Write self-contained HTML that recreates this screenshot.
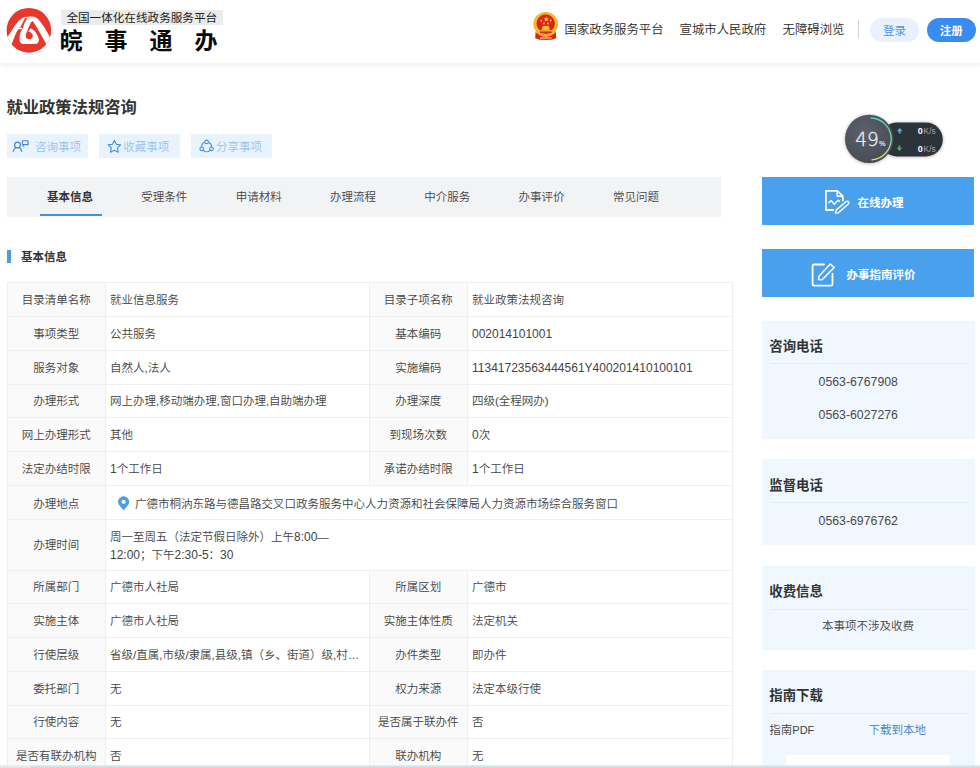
<!DOCTYPE html>
<html lang="zh-CN">
<head>
<meta charset="utf-8">
<title>就业政策法规咨询</title>
<style>
*{box-sizing:border-box;margin:0;padding:0}
html,body{width:980px;height:768px;overflow:hidden;background:#fff}
body{font-family:"Liberation Sans","Noto Sans CJK SC",sans-serif;font-size:11.5px;font-weight:350;color:#444;position:relative}
.abs{position:absolute}
svg{position:absolute;overflow:visible}
/* header */
#hdr{position:absolute;left:0;top:0;width:980px;height:63px;background:#fff;box-shadow:0 1.5px 0 #f3f3f3,0 2px 7px rgba(0,0,0,.075)}
#sub{font-weight:400;position:absolute;left:61px;top:9.5px;width:161.5px;height:15.5px;background:#ebebeb;font-size:11.6px;line-height:15.5px;color:#222;text-align:center;white-space:nowrap}
#brand{position:absolute;left:59.5px;top:24.8px;font-size:23px;font-weight:700;color:#0a0a0a;line-height:32px;letter-spacing:22px;white-space:nowrap}
.nav{position:absolute;top:20.5px;font-size:12.4px;line-height:18px;color:#2a2a2a;white-space:nowrap}
#vdiv{position:absolute;left:858px;top:20px;width:1px;height:18px;background:#d4d4d4}
.pill{position:absolute;top:18.3px;height:24px;border-radius:12px;font-size:11.5px;line-height:27.6px;text-align:center}
#login{left:870.3px;width:48.6px;background:#e8f1fc;color:#4a8fe6}
#reg{left:926.7px;width:49px;background:#3a8bf0;color:#fff;font-weight:700}
/* title */
#ttl{position:absolute;left:6.5px;top:95px;font-size:16.3px;font-weight:700;color:#333;line-height:24px;white-space:nowrap}
.act{position:absolute;top:134.3px;width:81.2px;height:23.8px;background:#e9f3fd;color:#97c3ee;font-size:11.5px;line-height:23.8px;white-space:nowrap}
.act span{position:absolute;top:1.3px}
/* tabs */
#tabs{position:absolute;left:7px;top:176.5px;width:714px;height:40px;background:#f2f3f5}
#tabs span{position:absolute;top:11.5px;line-height:18px;font-size:11.5px;color:#444;white-space:nowrap}
#tabs i{position:absolute;left:33px;top:37.3px;width:61.5px;height:2.4px;background:#4a8fe0}
/* section */
#sbar{position:absolute;left:7px;top:250px;width:4px;height:12.5px;background:#4a9be8}
#shead{position:absolute;left:21px;top:247.5px;font-size:11.5px;font-weight:700;line-height:18px;color:#333}
/* table */
#tbl{position:absolute;left:6.5px;top:282.4px;width:725.5px;border-collapse:collapse;table-layout:fixed;font-size:11.5px;color:#444}
#tbl td{border:1px solid #efefef;height:33.75px;padding:1.6px 4px 0 4px;vertical-align:middle;white-space:nowrap;overflow:hidden;text-overflow:ellipsis;line-height:17px}
#tbl td.l{text-align:center;background:#fafafa;padding:1.6px 0 0 0}
#tbl td.v{background:#fff}
.n{font-size:12px}
/* sidebar */
.bigbtn{position:absolute;left:762.4px;width:212px;height:48px;background:#49a0ed;color:#fff;font-size:11.5px;font-weight:700;line-height:48px;white-space:nowrap}
.panel{position:absolute;left:762px;width:212.5px;background:#f0f7fe}
.panel h3{position:absolute;left:7.3px;top:15.5px;font-size:13.4px;font-weight:700;color:#333;line-height:20px;white-space:nowrap}
.panel hr{position:absolute;left:7.5px;top:42px;width:198px;height:1px;border:0;background:#e3ecf6}
.panel .ph{position:absolute;left:0;width:192.5px;text-align:center;font-size:12.3px;color:#4a4a4a;line-height:18px}
#botl{position:absolute;left:0;top:765px;width:31px;height:3px;background:linear-gradient(#f0f1f2,#e0e2e4)}
#bot{position:absolute;left:31px;top:765px;width:949px;height:3px;background:linear-gradient(#e9eff5,#d3dde7 60%,#ccd7e2)}
</style>
</head>
<body>
<div id="hdr">
  <svg style="left:0;top:0" width="60" height="60" viewBox="0 0 60 60">
<defs><clipPath id="lc"><circle cx="28.9" cy="30.2" r="22.3"/></clipPath></defs>
<circle cx="28.9" cy="30.2" r="22.3" fill="#e8382c"/>
<g clip-path="url(#lc)">
<path d="M5,41 L7.76,36.7 L11.1,31.6 L14.6,26 L18.9,20.6 Q21.5,17.9 25,17.1 Q28.5,16.3 32.2,16.5 Q34,16.6 35.5,17.3 Q37.8,18.6 39.7,20.7 L43.8,26.5 L46.8,31.5 L49.7,36.7 L53,42 L53,48 L5,48 Z" fill="#fff"/>
<path d="M11.9,43.5 L15,35.5 L17.7,30 L18.7,29.1 L20.8,26.3 L24.3,19.6 L25,18 L27.2,18 L31.1,22.6 Q32.4,20.0 33.9,22.8 L36.3,26.5 L40.5,34 L43.4,39 L45.9,43.2 L47,56 L11,56 Z" fill="#e8382c"/>
<path d="M27.4,17.5 L24.2,23.8 L23.0,27.7 L20.8,31.6 L19.7,35.5 L19.5,39.4 Q19.6,43.6 23.5,44 L35,44 Q37.6,43.8 38.4,42 Q39.2,40.4 38.8,39 L37.6,35.7 Q36,32.6 34.25,30.7 Q32.4,29 30.5,28.2 L28.4,31.6 L26.6,32.25 L31.25,21.6 L31.25,17.5 Z" fill="#fff"/>
<path d="M26.6,32.2 L28.7,31.4 Q31.5,32.4 32.6,34.5 Q33.4,37 31.6,38.5 Q29.2,39.6 26.9,38.4 Q25.2,37 25.7,34.8 Z" fill="#e8382c"/>
<path d="M18.0,28.7 L22.2,28.3" stroke="#fff" stroke-width="1.2" fill="none"/>
</g>
</svg>
  <div id="sub">全国一体化在线政务服务平台</div>
  <div id="brand">皖事通办</div>
  <svg style="left:526px;top:8px" width="36" height="36" viewBox="526 8 36 36">
<path d="M535.6,31.5 L555.8,31.5 L556.2,38.2 Q551,40.4 545.7,40 Q540.4,40.4 535.2,38.2 Z" fill="#d9261c"/>
<ellipse cx="545.7" cy="23.9" rx="11.8" ry="11.4" fill="#f5c22e" stroke="#f0a818" stroke-width="1"/>
<circle cx="545.7" cy="23.4" r="9.2" fill="#de2418"/>
<path d="M536.6,30.4 Q545.7,38.5 554.8,30.4 L555.6,32.6 Q545.7,41 535.8,32.6 Z" fill="#f5c22e"/>
<path d="M538.6,31.2 L552.8,31.2 Q549.5,35.2 545.7,35.2 Q541.9,35.2 538.6,31.2 Z" fill="#d9261c"/>
<path d="M540,34.2 Q542.8,33 545.7,34.8 Q548.6,33 551.4,34.2" stroke="#f5c22e" stroke-width="1.1" fill="none"/>
<rect x="538.4" y="30.3" width="14.6" height="1.1" fill="#f5c22e"/>
<path d="M541.4,30.3 L542.3,26.9 L549.1,26.9 L550,30.3 Z" fill="#f2b92a"/>
<rect x="542.6" y="25.9" width="6.2" height="1.2" fill="#f2b92a"/>
<polygon points="546.2,16.6 546.9,18.4 548.8,18.5 547.3,19.7 547.8,21.5 546.2,20.5 544.6,21.5 545.1,19.7 543.6,18.5 545.5,18.4" fill="#f8d648"/>
<circle cx="541.2" cy="20.7" r="0.9" fill="#f8d648"/><circle cx="550.8" cy="20.5" r="0.9" fill="#f8d648"/>
<circle cx="544" cy="23.5" r="0.9" fill="#f8d648"/><circle cx="548" cy="23.5" r="0.9" fill="#f8d648"/>
<rect x="540" y="37" width="11.8" height="2.2" rx=".5" fill="#f08a5a"/>
</svg>
  <div class="nav" style="left:564.5px">国家政务服务平台</div>
  <div class="nav" style="left:679.5px">宣城市人民政府</div>
  <div class="nav" style="left:782.5px">无障碍浏览</div>
  <div id="vdiv"></div>
  <div class="pill" id="login">登录</div>
  <div class="pill" id="reg">注册</div>
</div>

<div id="ttl">就业政策法规咨询</div>
<div class="act" style="left:7.1px"><svg style="left:0;top:0" width="81.2" height="23.8" viewBox="7.1 134.3 81.2 23.8"><g fill="none" stroke="#4685cf" stroke-width="1.15" stroke-linecap="round" stroke-linejoin="round"><circle cx="17.6" cy="145.3" r="2.9"/><path d="M13.3,151.7 Q14.4,148.2 16.3,147.7 M21.8,151.6 Q20.8,148.2 18.9,147.7"/><path d="M22.5,141.1 H28.1 V145 H22.5 Z M23.4,145.1 V146.4"/></g></svg><span style="left:28px">咨询事项</span></div>
<div class="act" style="left:99px"><svg style="left:0;top:0" width="81.2" height="23.8" viewBox="99 134.3 81.2 23.8"><polygon points="114.40,140.70 116.31,144.57 120.58,145.19 117.49,148.20 118.22,152.46 114.40,150.45 110.58,152.46 111.31,148.20 108.22,145.19 112.49,144.57" fill="none" stroke="#4a8ed6" stroke-width="1.15" stroke-linejoin="round"/></svg><span style="left:24.3px">收藏事项</span></div>
<div class="act" style="left:190.8px"><svg style="left:0;top:0" width="81.2" height="23.8" viewBox="190.8 134.3 81.2 23.8"><g fill="none" stroke="#4a8ed6" stroke-width="1.1"><circle cx="206.4" cy="142.2" r="1.8"/><circle cx="201.5" cy="149.1" r="1.8"/><circle cx="211.3" cy="149.1" r="1.8"/><path d="M208.43,142.43 A5.0,5.0 0 0 1 211.40,147.17 M209.87,150.60 A5.0,5.0 0 0 1 202.93,150.60 M201.40,147.17 A5.0,5.0 0 0 1 204.37,142.43"/></g></svg><span style="left:25.3px">分享事项</span></div>

<svg style="left:838px;top:106px" width="112" height="66" viewBox="838 106 112 66">
<defs>
<linearGradient id="wg" x1="0" y1="0" x2="0" y2="1"><stop offset="0" stop-color="#45d8c4"/><stop offset=".55" stop-color="#7fdca0"/><stop offset="1" stop-color="#dfe46a"/></linearGradient>
<radialGradient id="wc" cx=".4" cy=".35" r=".75"><stop offset="0" stop-color="#5c616d"/><stop offset="1" stop-color="#444852"/></radialGradient>
<filter id="wb" x="-20%" y="-20%" width="140%" height="140%"><feGaussianBlur stdDeviation="1.6"/></filter>
</defs>
<g filter="url(#wb)" opacity=".22"><rect x="880" y="122" width="63.5" height="35.5" rx="17.7" fill="#000"/><circle cx="869.2" cy="139.4" r="24.8" fill="#000"/></g>
<rect x="880" y="122.4" width="62.8" height="34" rx="17" fill="#2e323b"/>
<circle cx="869.2" cy="138.9" r="24.2" fill="url(#wc)"/>
<path d="M871.2,118 A21,21 0 0 1 872,159.9" fill="none" stroke="url(#wg)" stroke-width="1.3" stroke-linecap="round"/>
<text x="855.2" y="146" font-family="'DejaVu Sans','Liberation Sans',sans-serif" font-weight="200" font-size="19.5" fill="#f2f3f5" stroke="#f2f3f5" stroke-width=".3" textLength="23.6" lengthAdjust="spacingAndGlyphs">49</text>
<text x="879" y="146.4" font-family="'Liberation Sans',sans-serif" font-weight="700" font-size="7.4" fill="#e8e9ec">%</text>
<path d="M899.7,128 L902.6,131.2 L900.6,131.2 L900.6,133.4 L898.8,133.4 L898.8,131.2 L896.8,131.2 Z" fill="#45b4e6"/>
<path d="M899.4,151 L902.2,147.8 L900.3,147.8 L900.3,145.6 L898.5,145.6 L898.5,147.8 L896.6,147.8 Z" fill="#3cba57"/>
<text x="917.8" y="134.2" font-family="'Liberation Sans',sans-serif" font-weight="700" font-size="9" fill="#fff">0</text>
<text x="923.6" y="134.2" font-family="'Liberation Sans',sans-serif" font-size="8.3" fill="#a6a9b0">K/s</text>
<text x="917.8" y="151.8" font-family="'Liberation Sans',sans-serif" font-weight="700" font-size="9" fill="#fff">0</text>
<text x="923.6" y="151.8" font-family="'Liberation Sans',sans-serif" font-size="8.3" fill="#a6a9b0">K/s</text>
</svg>

<div id="tabs">
  <span style="left:40px;font-weight:700;color:#333">基本信息</span>
  <span style="left:134.3px">受理条件</span>
  <span style="left:228.7px">申请材料</span>
  <span style="left:323px">办理流程</span>
  <span style="left:417.3px">中介服务</span>
  <span style="left:511.6px">办事评价</span>
  <span style="left:606px">常见问题</span>
  <i></i>
</div>

<div id="sbar"></div>
<div id="shead">基本信息</div>

<table id="tbl">
<colgroup><col style="width:98.5px"><col style="width:263.5px"><col style="width:98.5px"><col style="width:265px"></colgroup>
<tr><td class="l">目录清单名称</td><td class="v">就业信息服务</td><td class="l">目录子项名称</td><td class="v">就业政策法规咨询</td></tr>
<tr><td class="l">事项类型</td><td class="v">公共服务</td><td class="l">基本编码</td><td class="v"><span class="n">002014101001</span></td></tr>
<tr><td class="l">服务对象</td><td class="v">自然人,法人</td><td class="l">实施编码</td><td class="v"><span class="n">11341723563444561Y400201410100101</span></td></tr>
<tr><td class="l">办理形式</td><td class="v">网上办理,移动端办理,窗口办理,自助端办理</td><td class="l">办理深度</td><td class="v">四级(全程网办)</td></tr>
<tr><td class="l">网上办理形式</td><td class="v">其他</td><td class="l">到现场次数</td><td class="v"><span class="n">0</span>次</td></tr>
<tr><td class="l">法定办结时限</td><td class="v"><span class="n">1</span>个工作日</td><td class="l">承诺办结时限</td><td class="v"><span class="n">1</span>个工作日</td></tr>
<tr><td class="l" style="padding-top:5.4px">办理地点</td><td class="v" colspan="3" style="padding-left:29px;padding-top:5.4px">广德市桐汭东路与德昌路交叉口政务服务中心人力资源和社会保障局人力资源市场综合服务窗口</td></tr>
<tr><td class="l" style="height:51px">办理时间</td><td class="v" colspan="3" style="line-height:17.5px;padding-top:3.8px">周一至周五（法定节假日除外）上午<span class="n">8:00</span>—<br><span class="n">12:00</span>；下午<span class="n">2:30-5</span>：<span class="n">30</span></td></tr>
<tr><td class="l">所属部门</td><td class="v">广德市人社局</td><td class="l">所属区划</td><td class="v">广德市</td></tr>
<tr><td class="l">实施主体</td><td class="v">广德市人社局</td><td class="l">实施主体性质</td><td class="v">法定机关</td></tr>
<tr><td class="l">行使层级</td><td class="v">省级/直属,市级/隶属,县级,镇（乡、街道）级,村（社区）级</td><td class="l">办件类型</td><td class="v">即办件</td></tr>
<tr><td class="l">委托部门</td><td class="v">无</td><td class="l">权力来源</td><td class="v">法定本级行使</td></tr>
<tr><td class="l">行使内容</td><td class="v">无</td><td class="l">是否属于联办件</td><td class="v">否</td></tr>
<tr><td class="l">是否有联办机构</td><td class="v">否</td><td class="l">联办机构</td><td class="v">无</td></tr>
</table>

<div class="bigbtn" style="top:177px"><svg style="left:0;top:0" width="212" height="48" viewBox="762.4 177 212 48"><g fill="none" stroke="#fff" stroke-linejoin="round" stroke-linecap="round"><path d="M833.6,210 L826.3,210 L826.3,190.9 L837.6,190.9 L843.2,196.2 L843.2,200.6" stroke-width="1.8"/><path d="M837.5,191.6 L837.5,196.3 L842.6,196.3" stroke-width="1.4"/><path d="M829.3,202.8 L831.5,200.5 L834.6,204.2 L838.6,200.2 L839.9,201.2" stroke-width="1.4"/><path d="M835.7,213 L836.5,210.1 L846.2,201.7 Q848,200.6 849,202 Q849.6,203.2 848.5,204.3 L838.7,212.8 Z" stroke-width="1.5"/></g></svg><span class="abs" style="left:95px;top:2px">在线办理</span></div>
<div class="bigbtn" style="top:249.2px"><svg style="left:0;top:0" width="212" height="48" viewBox="762.4 249.2 212 48"><g fill="none" stroke="#fff" stroke-linejoin="round" stroke-linecap="round"><path d="M824.4,264.7 L814.4,264.7 Q813,264.7 813,266.1 L813,284.4 Q813,285.8 814.4,285.8 L831.5,285.8 Q832.9,285.8 832.9,284.4 L832.9,273.8" stroke-width="1.8"/><path d="M818.9,279.7 L819.4,276.4 L830.7,264.3 L834.6,267.6 L822.5,279.9 Z" stroke-width="1.5"/></g></svg><span class="abs" style="left:84px;top:2px">办事指南评价</span></div>

<div class="panel" style="top:321.3px;height:118.2px"><h3>咨询电话</h3><hr><div class="ph" style="top:51.7px">0563-6767908</div><div class="ph" style="top:85.2px">0563-6027276</div></div>
<div class="panel" style="top:458.8px;height:86.2px"><h3 style="top:17px">监督电话</h3><hr style="top:43.5px"><div class="ph" style="top:53px">0563-6976762</div></div>
<div class="panel" style="top:565.5px;height:84px"><h3 style="top:16.7px">收费信息</h3><hr style="top:43px"><div class="ph" style="top:51px;width:212px;font-size:11.5px;color:#444">本事项不涉及收费</div></div>
<div class="panel" style="top:669.5px;height:110px"><h3 style="top:16.5px">指南下载</h3><hr style="top:43px"><div class="abs" style="left:7.3px;top:51.5px;line-height:18px;font-size:11.5px;color:#444">指南<span style="font-size:11px">PDF</span></div><div class="abs" style="left:106.5px;top:51.5px;line-height:18px;font-size:11.5px;color:#3f80c6">下载到本地</div><div class="abs" style="left:24.3px;top:85px;width:164.2px;height:30px;background:#fff"></div></div>

<svg style="left:117px;top:495px" width="14" height="17" viewBox="117 495 14 17"><path d="M123.6,510.4 C121.6,507.6 118,504.8 118,501.9 A5.6,5.6 0 0 1 129.2,501.9 C129.2,504.8 125.6,507.6 123.6,510.4 Z" fill="#4a9de8"/><circle cx="123.6" cy="501.8" r="2.1" fill="#fff"/></svg>
<div id="botl"></div><div id="bot"></div>
</body>
</html>
